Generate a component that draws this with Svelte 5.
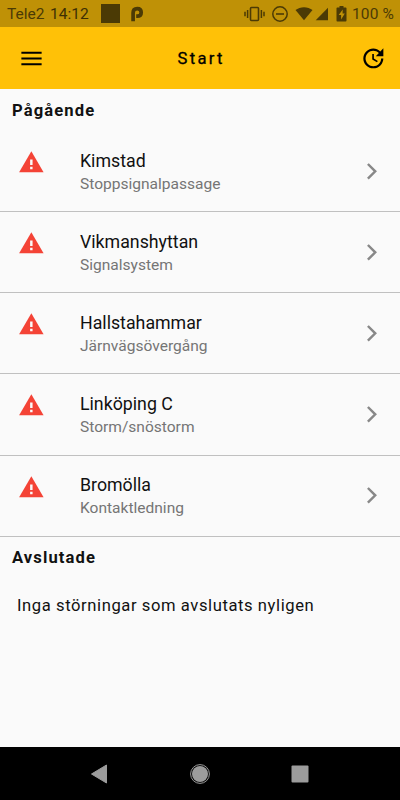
<script>
  const items = [
    ['Kimstad', 'Stoppsignalpassage'],
    ['Vikmanshyttan', 'Signalsystem'],
    ['Hallstahammar', 'Järnvägsövergång'],
    ['Linköping C', 'Storm/snöstorm'],
    ['Bromölla', 'Kontaktledning']
  ];
</script>

<div class="screen">
  <div class="status">
    <span class="carrier">Tele2</span>
    <span class="time">14:12</span>
    <span class="square"></span>
    <svg class="parking" width="13" height="16" viewBox="0 0 13 16"><path d="M2.1 15.2V6.8Q2.1 2.6 6.2 2.6Q10.2 2.6 10.2 6.4Q10.2 10.2 6.2 10.2H5.2" fill="none" stroke="#4b3a05" stroke-width="3.7" /></svg>
    <svg class="icons" width="104" height="18" viewBox="0 0 104 18" fill="#4b3a05">
      <path d="M1 6.8v4.4M3.6 5v8M17.4 5v8M20 6.8v4.4" stroke="#4b3a05" stroke-width="1.5" />
      <rect x="6.5" y="2.5" width="8" height="13" rx="1" fill="none" stroke="#4b3a05" stroke-width="1.6" />
      <circle cx="36" cy="9" r="7.2" fill="none" stroke="#4b3a05" stroke-width="1.5" />
      <path d="M32 8.2h8v1.6h-8z" />
      <path d="M51.5 5.1C56 1.2 64 1.2 68.5 5.1L60 15.3z" />
      <path d="M84 2.8v12.5H71.7z" />
      <path fill-rule="evenodd" d="M95.5 1h4v1.4h2.2c.5 0 .8.3.8.8v12.4c0 .6-.3.9-.8.9h-8.4c-.5 0-.8-.3-.8-.9V3.2c0-.5.3-.8.8-.8h2.2zM98.7 4.6l-4 5.4h2.4v4.6l3.7-6h-2.2z" />
    </svg>
    <span class="percent">100 %</span>
  </div>

  <header>
    <svg class="menu" width="27" height="27" viewBox="0 0 24 24"><path d="M3 18h18v-1.8H3zm0-5.1h18v-1.8H3zM3 6v1.8h18V6z" /></svg>
    <h1>Start</h1>
    <svg class="refresh" width="26.7" height="26.7" viewBox="0 0 24 24"><path d="M21 10.12h-6.78l2.74-2.82c-2.73-2.7-7.15-2.8-9.88-.1-2.73 2.71-2.73 7.08 0 9.79s7.15 2.71 9.88 0C18.32 15.65 19 14.08 19 12.1h2c0 1.98-.88 4.55-2.64 6.29-3.51 3.48-9.21 3.48-12.72 0-3.5-3.47-3.53-9.11-.02-12.58s9.14-3.47 12.65 0L21 3v7.12zM12.5 8v4.25l3.5 2.08-.72 1.21L11 13V8h1.5z" /></svg>
  </header>

  <main>
    <h2>Pågående</h2>
    {#each items as [place, cause]}
      <div class="row">
        <svg class="warn" width="26.7" height="26.7" viewBox="0 0 24 24"><path fill="#f44336" d="M1 21h22L12 2z" /><path fill="#fafafa" d="M10.9 9.4h2.2v4.9h-2.2zM10.9 16h2.2v2.1h-2.2z" /></svg>
        <div class="copy">
          <div class="place">{place}</div>
          <div class="cause">{cause}</div>
        </div>
        <svg class="chevron" width="26.7" height="26.7" viewBox="0 0 24 24"><path fill="none" stroke="#888" stroke-width="2.2" d="m8.9 5.4 6.6 6.6-6.6 6.6" /></svg>
      </div>
    {/each}
    <h2 class="ended">Avslutade</h2>
    <p>Inga störningar som avslutats nyligen</p>
  </main>

  <nav>
    <svg width="20" height="22" viewBox="0 0 20 22"><path d="M1.5 11 16.5 2v18z" fill="#9c9c9c" stroke="#9c9c9c" stroke-linejoin="round" /></svg>
    <svg width="22" height="22" viewBox="0 0 22 22"><circle cx="11" cy="11" r="9.4" fill="none" stroke="#9c9c9c" /><circle cx="11" cy="11" r="8" fill="#9c9c9c" /></svg>
    <svg width="20" height="22" viewBox="0 0 20 22"><rect x="1.5" y="2.5" width="17" height="17" rx="1" fill="#9c9c9c" /></svg>
  </nav>
</div>

<style>
  .screen {
    width: 400px;
    height: 800px;
    display: flex;
    flex-direction: column;
    overflow: hidden;
    background: #fafafa;
    color: #111;
    font-family: Roboto, sans-serif;
  }
  svg { display: block; flex: none; }
  h1, h2, p { margin: 0; }
  .status {
    height: 27px;
    flex: none;
    box-sizing: border-box;
    padding-left: 7px;
    display: flex;
    align-items: center;
    background: #bf9106;
    color: #4b3a05;
    font-size: 15.5px;
    line-height: 27px;
    white-space: nowrap;
  }
  .carrier, .time, .percent { padding-top: 1px; line-height: 26px; }
  .carrier { width: 43px; }
  .time { width: 51px; color: #3d2f04; }
  .square { width: 19px; height: 19px; background: #4b3a05; }
  .parking { margin-left: 11px; }
  .icons { margin-left: 100px; }
  .percent { margin-left: 4px; letter-spacing: .15px; }
  header {
    height: 62px;
    flex: none;
    box-sizing: border-box;
    padding: 0 13.5px 0 17.5px;
    display: flex;
    align-items: center;
    justify-content: space-between;
    background: #ffc107;
  }
  h1 {
    margin-left: -2px;
    font-size: 16.6px;
    font-weight: 400;
    letter-spacing: 2.3px;
    color: #000;
    -webkit-text-stroke: .3px #000;
  }
  main { flex: 1; min-height: 0; }
  h2 {
    height: 42.1px;
    padding-left: 12px;
    font-size: 16.6px;
    font-weight: 700;
    line-height: 43px;
    letter-spacing: 1.1px;
  }
  .ended { height: 41.5px; line-height: 42px; }
  .row {
    height: 81.12px;
    box-sizing: border-box;
    border-bottom: 1px solid #c0c0c0;
    padding: 0 15px 0 17.6px;
    display: flex;
  }
  .warn { margin-top: 18px; }
  .copy { flex: 1; margin-left: 35.7px; padding-top: 18.6px; }
  .place { font-size: 17.78px; line-height: 23px; }
  .cause { font-size: 15.56px; line-height: 23px; color: #757575; }
  .chevron { align-self: center; }
  p { padding: 15.5px 0 0 17px; font-size: 16.6px; line-height: 24px; letter-spacing: .58px; }
  nav {
    height: 53px;
    flex: none;
    box-sizing: border-box;
    padding: 0 90px;
    display: flex;
    align-items: center;
    justify-content: space-between;
    background: #000;
  }
</style>
